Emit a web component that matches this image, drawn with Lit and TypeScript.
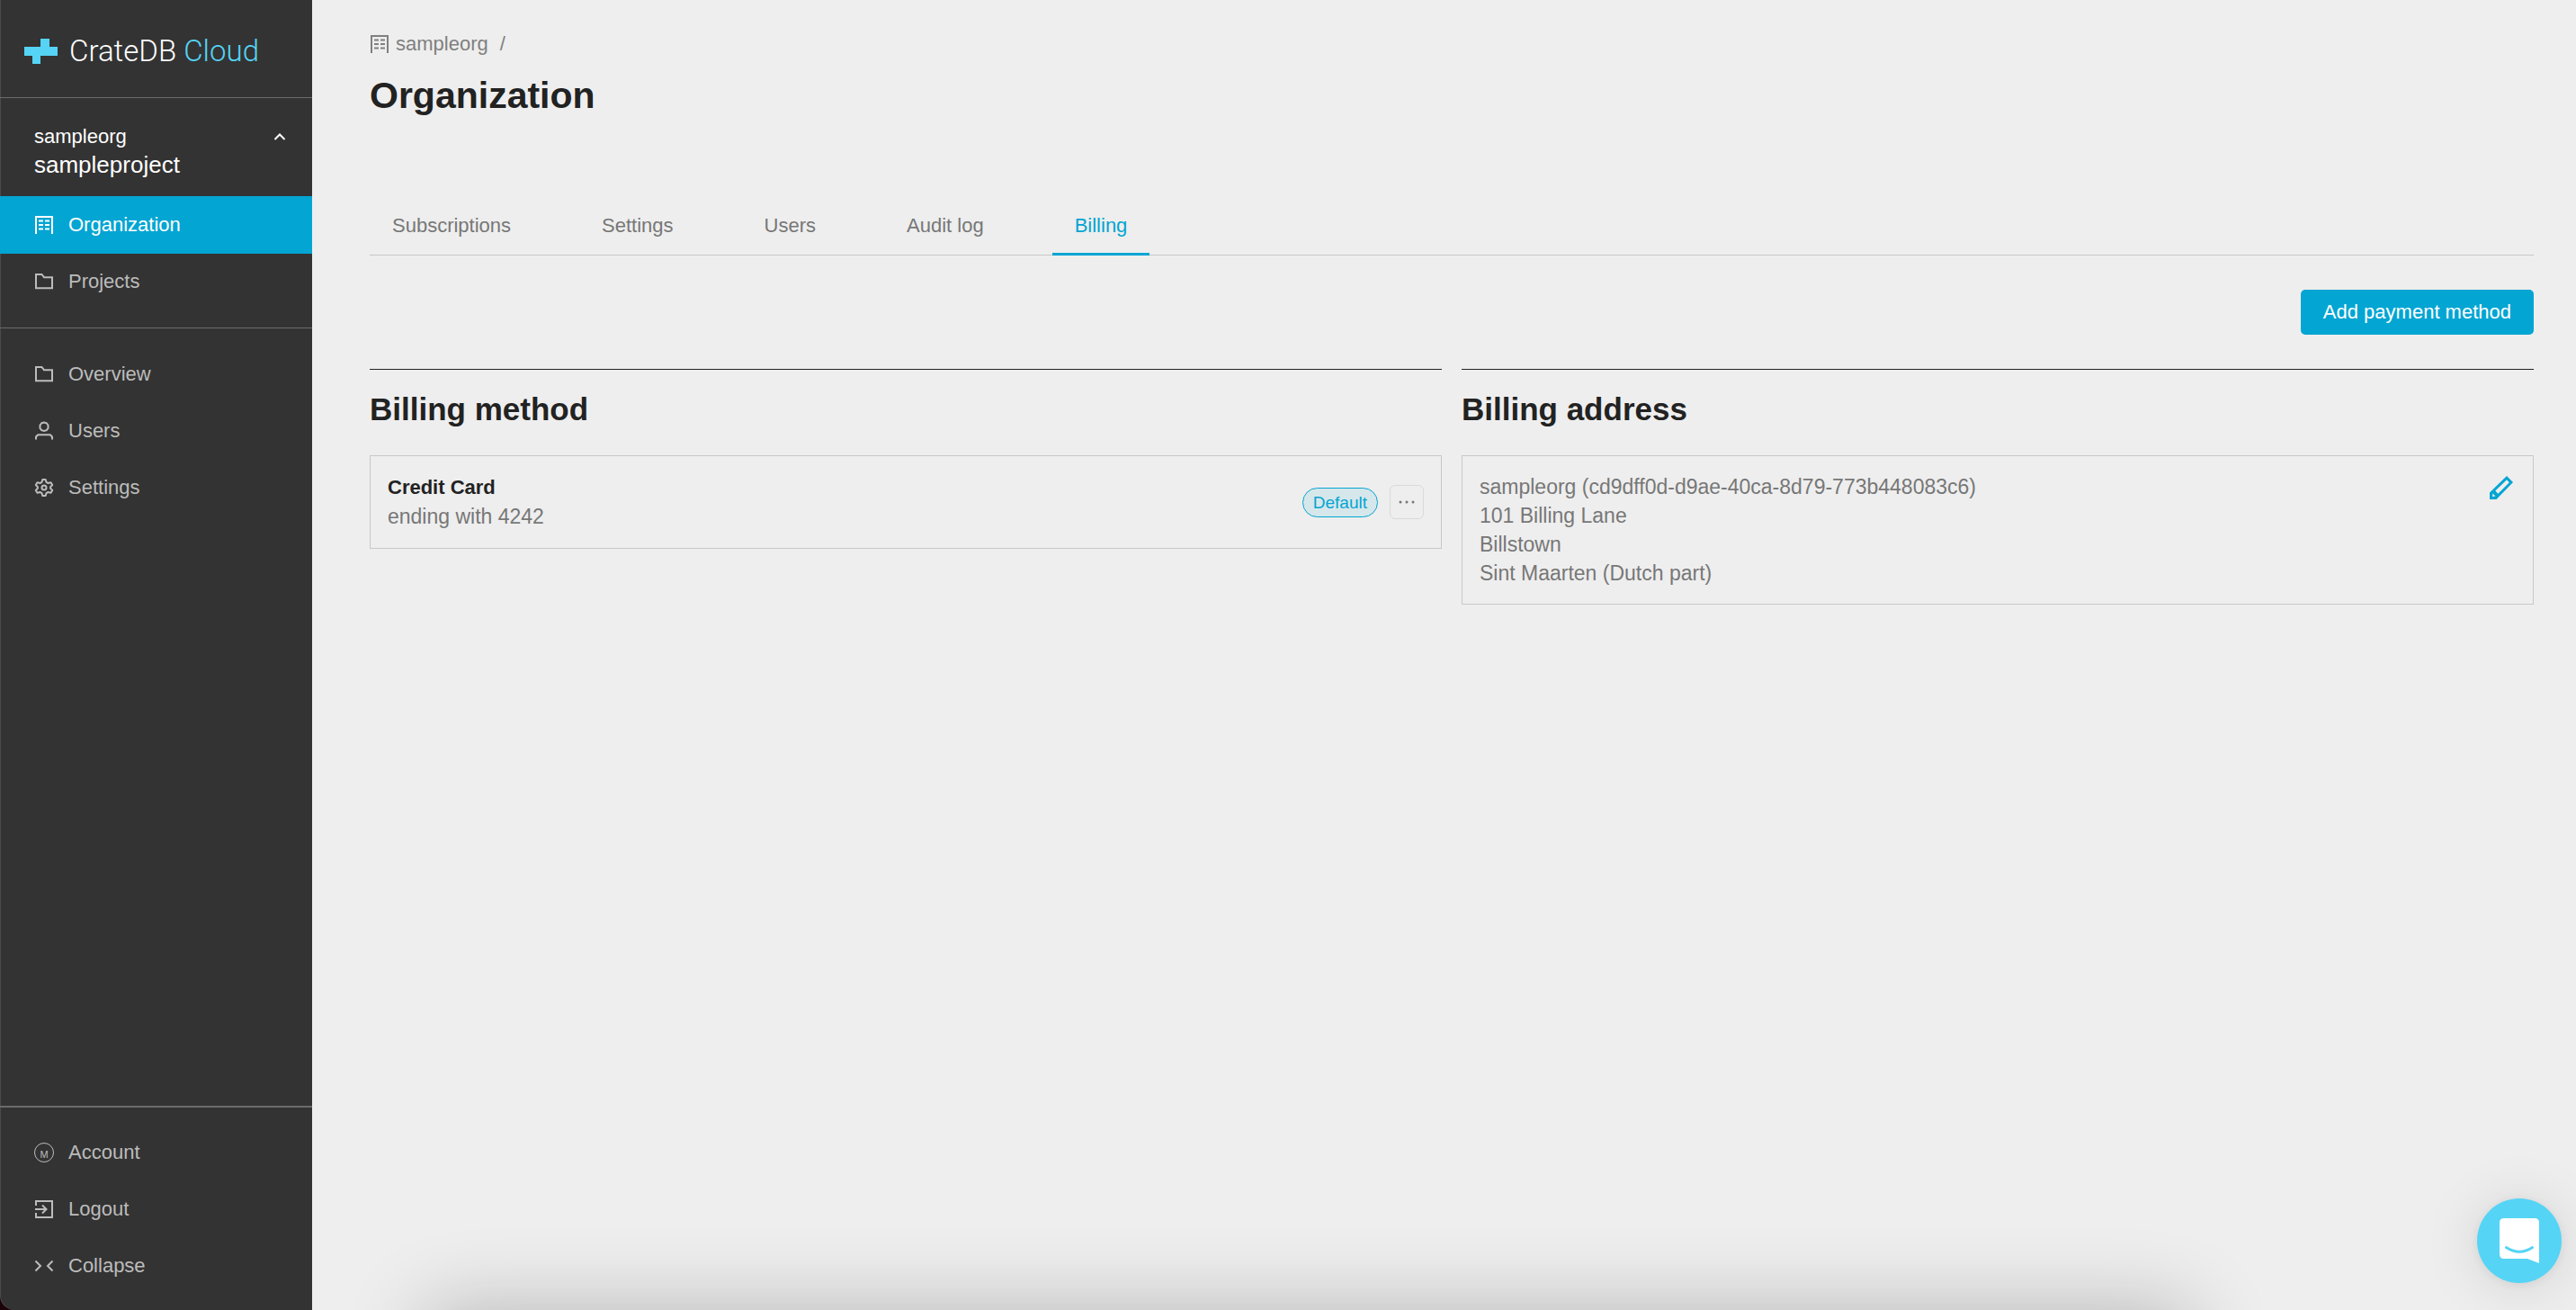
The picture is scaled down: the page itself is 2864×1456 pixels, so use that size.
import { LitElement, html, css, svg } from "lit";
import { customElement } from "lit/decorators.js";

const building = svg`<path d="M2 21V2H20V21" fill="none" stroke="currentColor" stroke-width="2"/>
  <path d="M5 6.500h5M12 6.500h5M5 11h5M12 11h5M5 15.500h5M12 15.500h5" fill="none" stroke="currentColor" stroke-width="2"/>`;
const folder = svg`<path d="M2 3H8.500L11 6.300H20V18.200H2Z" fill="none" stroke="currentColor" stroke-width="2"/>`;
const user = svg`<path d="M8.200 2.300L11 1.500L13.800 2.300L15.500 4.500V8L13.800 10.200L11 11L8.200 10.200L6.500 8V4.500Z" fill="none" stroke="currentColor" stroke-width="2"/>
  <path d="M2 20.500V17.500L4.200 15.200H17.800L20 17.500V20.500" fill="none" stroke="currentColor" stroke-width="2"/>`;
const gear = svg`<path d="M9.300 1.900H12.700L13.500 4.900L15.500 6L18.500 5.200L20.200 8.100L18.100 10.200V11.800L20.200 13.900L18.500 16.800L15.500 16L13.500 17.100L12.700 20.100H9.300L8.500 17.100L6.500 16L3.500 16.800L1.800 13.900L3.900 11.800V10.200L1.800 8.100L3.500 5.200L6.500 6L8.500 4.900Z" fill="none" stroke="currentColor" stroke-width="2" stroke-linejoin="round"/>
  <circle cx="11" cy="11" r="2.500" fill="none" stroke="currentColor" stroke-width="2"/>`;
const logout = svg`<path d="M2 7V2H20V20H2V15" fill="none" stroke="currentColor" stroke-width="2"/>
  <path d="M1 11H13M9 6.500L13.500 11L9 15.500" fill="none" stroke="currentColor" stroke-width="2"/>`;
const collapse = svg`<path d="M1.500 5.500L7 11L1.500 16.500M20.500 5.500L15 11L20.500 16.500" fill="none" stroke="currentColor" stroke-width="2"/>`;

const icon = (shape: unknown) =>
  html`<svg class="icon" viewBox="0 0 22 22" aria-hidden="true">${shape}</svg>`;

@customElement("app-sidebar")
class AppSidebar extends LitElement {
  static styles = css`
    :host { display: flex; background: #1c0209; }
    * { box-sizing: border-box; }
    .panel {
      flex: 1; display: flex; flex-direction: column;
      background: #333; color: #bcbcbc;
      border-bottom-left-radius: 16px;
      box-shadow: inset 1px 0 0 rgba(255, 255, 255, 0.12);
      font-size: 22px;
    }
    .logo {
      display: flex; align-items: center; gap: 13px;
      height: 109px; padding: 6px 27px 0;
      border-bottom: 1px solid #6b6b6b;
      color: #fff; text-decoration: none;
    }
    .mark { width: 37px; height: 28px; fill: #55d4f5; }
    .word { font: 300 33px/40px Roboto, "Liberation Sans", sans-serif; white-space: nowrap; }
    .cloud { color: #55d4f5; }
    .context {
      display: grid; grid-template-columns: 1fr auto; align-items: center;
      width: 100%; padding: 28px 28px 19px 38px;
      background: none; border: 0; color: #fff; text-align: left;
      font: inherit; line-height: 30px;
    }
    .project { grid-column: 1 / -1; font-size: 26px; line-height: 32px; }
    .chevron { width: 16px; height: 16px; }
    .group { display: flex; flex-direction: column; padding: 19px 0 18px; }
    .group.first { padding: 0 0 20px; }
    .group + .group { border-top: 1px solid #6b6b6b; }
    .group.last { margin-top: auto; border-top-width: 2px; padding-top: 18px; }
    .item {
      display: flex; align-items: center; gap: 16px;
      height: 64px; margin-bottom: -1px; padding: 0 38px; width: 100%;
      color: inherit; text-decoration: none;
      background: none; border: 0; font: inherit; text-align: left;
    }
    .item.active { background: #03a5d3; color: #fff; }
    .icon { width: 22px; height: 22px; flex: none; }
    .avatar {
      width: 22px; height: 22px; flex: none;
      border: 1px solid currentColor; border-radius: 50%;
      font-size: 11px; line-height: 24px; text-align: center;
    }
  `;
  render() {
    return html`
      <div class="panel">
        <a class="logo" href="#home">
          <svg class="mark" viewBox="0 0 37 28" aria-hidden="true"><path d="M18 0H28V9H37V19H18V28H9V19H0V9H18Z"/></svg>
          <span class="word">CrateDB <span class="cloud">Cloud</span></span>
        </a>
        <button class="context" type="button" aria-expanded="true">
          <span>sampleorg</span>
          <svg class="chevron" viewBox="0 0 16 16" aria-hidden="true"><path d="M2.500 11L8 5.500L13.500 11" fill="none" stroke="currentColor" stroke-width="2"/></svg>
          <span class="project">sampleproject</span>
        </button>
        <nav class="group first" aria-label="Organization">
          <a class="item active" href="#organization" aria-current="page">${icon(building)}Organization</a>
          <a class="item" href="#projects">${icon(folder)}Projects</a>
        </nav>
        <nav class="group" aria-label="Project">
          <a class="item" href="#overview">${icon(folder)}Overview</a>
          <a class="item" href="#users">${icon(user)}Users</a>
          <a class="item" href="#settings">${icon(gear)}Settings</a>
        </nav>
        <nav class="group last" aria-label="Account">
          <a class="item" href="#account"><span class="avatar">M</span>Account</a>
          <a class="item" href="#logout">${icon(logout)}Logout</a>
          <button class="item" type="button">${icon(collapse)}Collapse</button>
        </nav>
      </div>
    `;
  }
}

@customElement("billing-page")
class BillingPage extends LitElement {
  static styles = css`
    :host { display: block; padding: 32px 47px 48px 64px; color: #777; font-size: 22px; }
    * { box-sizing: border-box; }
    h1, h2, p { margin: 0; }
    .crumbs { display: flex; align-items: center; gap: 13px; height: 34px; color: #808080; }
    .crumb { display: flex; align-items: center; gap: 7px; color: inherit; text-decoration: none; }
    .icon { width: 22px; height: 22px; flex: none; }
    h1 { margin-top: 12px; font-size: 41px; line-height: 56px; color: #222; }
    .tabs {
      display: flex; gap: 51px; margin-top: 84px;
      border-bottom: 1px solid #c8c8c8;
    }
    .tab {
      height: 66px; margin-bottom: -1px; padding: 0 25px;
      border-bottom: 3px solid transparent;
      color: inherit; text-decoration: none; line-height: 65px;
    }
    .tab.active { color: #03a5d3; border-bottom-color: #03a5d3; }
    .actions { display: flex; justify-content: flex-end; padding: 38px 0; }
    .primary {
      height: 50px; padding: 0 25px; border: 0; border-radius: 5px;
      background: #03a5d3; color: #fff; font: inherit;
    }
    .columns { display: grid; grid-template-columns: 1fr 1fr; gap: 22px; align-items: start; }
    section { border-top: 1px solid #222; }
    h2 { padding: 22px 0 29px; font-size: 35px; line-height: 44px; color: #222; }
    .card {
      display: flex; justify-content: space-between;
      padding: 18px 19px; border: 1px solid #c8c8c8;
      font-size: 23px; line-height: 32px;
    }
    .method { display: flex; flex-direction: column; padding: 1px 0; }
    .name { font-size: 22px; color: #222; }
    .side { display: flex; align-items: center; gap: 13px; }
    .badge {
      padding: 0 11px; border: 1px solid #03a5d3; border-radius: 17px;
      background: #d6e7eb; color: #03a5d3; font-size: 19px; line-height: 31px;
    }
    .more {
      display: flex; align-items: center; justify-content: center;
      width: 38px; height: 38px; padding: 0;
      background: none; border: 1px solid #dadada; border-radius: 6px; color: #777;
    }
    .dots { width: 18px; height: 4px; fill: currentColor; }
    address { font-style: normal; }
    .edit { height: 34px; padding: 4px 3px; background: none; border: 0; color: #03a5d3; }
    .pencil { display: block; width: 26px; height: 26px; }
  `;
  private tabs = ["Subscriptions", "Settings", "Users", "Audit log", "Billing"];
  render() {
    return html`
      <nav class="crumbs" aria-label="Breadcrumb">
        <a class="crumb" href="#organization">
          <svg class="icon" viewBox="0 0 22 22" aria-hidden="true">${building}</svg>sampleorg</a>
        <span>/</span>
      </nav>
      <h1>Organization</h1>
      <nav class="tabs" aria-label="Organization sections">
        ${this.tabs.map(
          (t) => html`<a class="tab ${t === "Billing" ? "active" : ""}" href="#${t.toLowerCase().replace(" ", "-")}">${t}</a>`
        )}
      </nav>
      <div class="actions"><button class="primary" type="button">Add payment method</button></div>
      <div class="columns">
        <section>
          <h2>Billing method</h2>
          <div class="card">
            <div class="method">
              <strong class="name">Credit Card</strong>
              <span>ending with 4242</span>
            </div>
            <div class="side">
              <span class="badge">Default</span>
              <button class="more" type="button" aria-label="More actions">
                <svg class="dots" viewBox="0 0 18 4" aria-hidden="true"><circle cx="2" cy="2" r="1.500"/><circle cx="9" cy="2" r="1.500"/><circle cx="16" cy="2" r="1.500"/></svg>
              </button>
            </div>
          </div>
        </section>
        <section>
          <h2>Billing address</h2>
          <div class="card">
            <address>
              <p>sampleorg (cd9dff0d-d9ae-40ca-8d79-773b448083c6)</p>
              <p>101 Billing Lane</p>
              <p>Billstown</p>
              <p>Sint Maarten (Dutch part)</p>
            </address>
            <button class="edit" type="button" aria-label="Edit billing address">
              <svg class="pencil" viewBox="0 0 26 26" aria-hidden="true">
                <path fill="currentColor" fill-rule="evenodd" d="M19 0L26 7L7.500 26H0V18.500ZM19 4.200L6.300 16.500L9.300 19.700L21.800 7.200ZM3.500 19.500L3 23L6.500 22.500Z"/>
              </svg>
            </button>
          </div>
        </section>
      </div>
    `;
  }
}

@customElement("app-root")
class AppRoot extends LitElement {
  static styles = css`
    :host {
      display: grid; grid-template-columns: 347px 1fr;
      min-height: 100vh; position: relative; overflow: hidden;
      background: #eee; font-family: "Liberation Sans", Arial, sans-serif;
    }
    .content { position: relative; overflow: hidden; }
    .shade {
      position: absolute; left: 5%; right: 17%; top: 100%; height: 200px;
      box-shadow: 0 0 90px rgba(0, 0, 0, 0.24);
    }
    .chat {
      position: fixed; right: 16px; bottom: 30px; width: 94px; height: 94px;
      display: flex; align-items: center; justify-content: center; padding: 0;
      border: 0; border-radius: 50%; background: #55d4f5;
      box-shadow: 0 2px 12px rgba(0, 0, 0, 0.08), 0 4px 64px rgba(0, 0, 0, 0.12);
    }
    .bubble { width: 44px; height: 50px; }
  `;
  render() {
    return html`
      <app-sidebar></app-sidebar>
      <main class="content">
        <billing-page></billing-page>
        <div class="shade"></div>
      </main>
      <button class="chat" type="button" aria-label="Open chat">
        <svg class="bubble" viewBox="0 0 44 50" aria-hidden="true">
          <path fill="#fff" d="M5 0H39Q44 0 44 5V50L31 45H5Q0 45 0 40V5Q0 0 5 0Z"/>
          <path d="M7.500 32.500Q22 42 36.500 32.500" fill="none" stroke="#55d4f5" stroke-width="3" stroke-linecap="round"/>
        </svg>
      </button>
    `;
  }
}
